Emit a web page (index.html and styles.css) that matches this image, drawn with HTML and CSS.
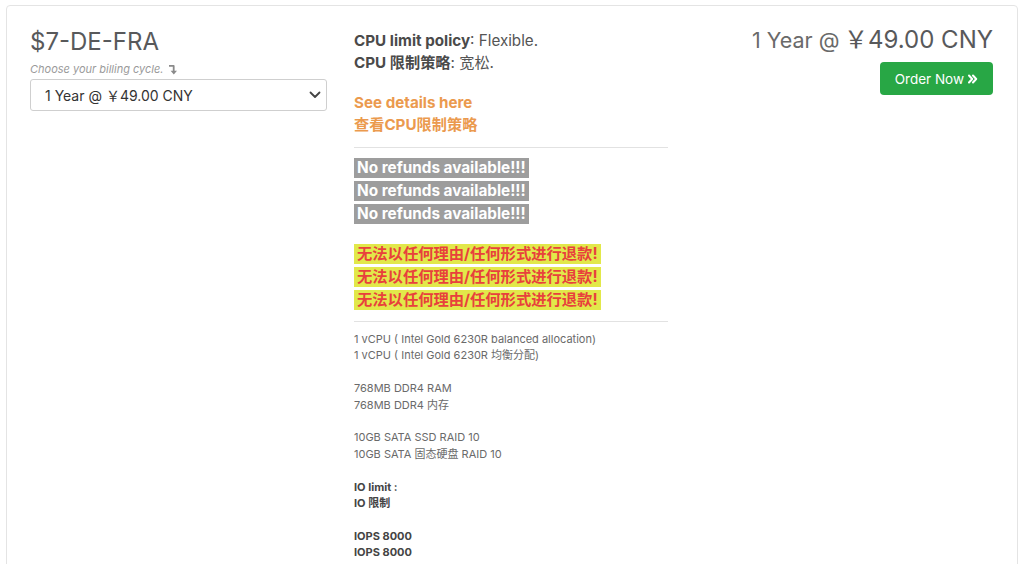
FILE: index.html
```html
<!DOCTYPE html>
<html lang="en">
<head>
<meta charset="utf-8">
<title>$7-DE-FRA</title>
<link rel="stylesheet" href="styles.css">
</head>
<body>
<div class="card">
  <div class="col-left">
    <h2 class="title">$7-DE-FRA</h2>
    <div class="cycle-hint">Choose your billing cycle.
      <svg class="hint-icon" width="9" height="11" viewBox="0 0 9 11"><path d="M0 1 H4.6 Q5.6 1 5.6 2 V6.8 H8 L4.8 10.6 L1.6 6.8 H3.8 V2.8 H0 Z" fill="#8a8a8a"/></svg>
    </div>
    <div class="select-wrap">
      <select class="cycle-select">
        <option>1 Year @ ￥49.00 CNY</option>
      </select>
      <svg class="chev" width="12" height="8" viewBox="0 0 12 8"><path d="M1.5 1.5 L6 6 L10.5 1.5" fill="none" stroke="#444" stroke-width="1.8" stroke-linecap="round" stroke-linejoin="round"/></svg>
    </div>
  </div>

  <div class="col-mid">
    <p class="policy"><b>CPU limit policy</b>: Flexible.<br><b>CPU 限制策略</b>: 宽松.</p>
    <p class="details"><a href="#">See details here</a><br><a href="#">查看CPU限制策略</a></p>
    <hr class="rule">
    <div class="refund-list">
      <span class="badge-grey">No refunds available!!!</span>
      <span class="badge-grey">No refunds available!!!</span>
      <span class="badge-grey">No refunds available!!!</span>
    </div>
    <div class="refund-list cn">
      <span class="badge-yellow">无法以任何理由/任何形式进行退款!</span>
      <span class="badge-yellow">无法以任何理由/任何形式进行退款!</span>
      <span class="badge-yellow">无法以任何理由/任何形式进行退款!</span>
    </div>
    <hr class="rule rule-tight">
    <div class="specs">
      <p>1 vCPU ( Intel Gold 6230R balanced allocation)<br>1 vCPU ( Intel Gold 6230R 均衡分配)</p>
      <p>768MB DDR4 RAM<br>768MB DDR4 内存</p>
      <p>10GB SATA SSD RAID 10<br>10GB SATA 固态硬盘 RAID 10</p>
      <p class="strong">IO limit :<br>IO 限制</p>
      <p class="strong">IOPS 8000<br>IOPS 8000</p>
    </div>
  </div>

  <div class="col-right">
    <div class="price"><span class="price-cycle">1 Year @</span> <span class="price-amount">￥49.00 CNY</span></div>
    <a class="btn-order" href="#">Order Now
      <svg width="10" height="10" viewBox="0 0 10 10"><path d="M1 1.5 L4.2 5 L1 8.5 M5 1.5 L8.2 5 L5 8.5" fill="none" stroke="#fff" stroke-width="2" stroke-linecap="round" stroke-linejoin="round"/></svg>
    </a>
  </div>
</div>
</body>
</html>
```

FILE: styles.css
```css
* { box-sizing: border-box; }
html, body { margin: 0; background: #fff; }
body {
  padding: 5px 6px 0 6px;
  font-family: Inter, "Noto Sans CJK SC", sans-serif;
  color: #58595b;
  height: 564px;
  overflow: hidden;
}
.card {
  border: 1px solid #e4e4e4;
  border-radius: 4px;
  padding: 22px 24px 40px 23px;
  display: grid;
  grid-template-columns: 297px 314px 1fr;
  column-gap: 27px;
  min-height: 600px;
}
.title {
  margin: -1px 0 0;
  font-size: 24px;
  font-weight: 400;
  line-height: 30px;
  color: #58595b;
}
.cycle-hint {
  margin-top: 5px;
  font-size: 11px;
  font-style: italic;
  color: #9a9a9a;
  line-height: 14px;
}
.hint-icon { vertical-align: -2px; margin-left: 2px; }
.select-wrap {
  position: relative;
  margin-top: 3px;
}
.cycle-select {
  appearance: none;
  -webkit-appearance: none;
  width: 297px;
  height: 32px;
  border: 1px solid #cfcfcf;
  border-radius: 3px;
  background: #fff;
  padding: 0 14px;
  font-family: Inter, "Noto Sans CJK SC", sans-serif;
  font-size: 14px;
  color: #333;
}
.chev { position: absolute; right: 6px; top: 12px; }

.col-mid { font-size: 15.2px; line-height: 22px; }
.policy { margin: 2px 0 0; color: #555; }
.policy b { color: #4a4a4a; }
.details { margin: 18px 0 0; font-weight: 700; }
.details a { color: #eb9a4e; text-decoration: none; }
.rule {
  border: 0;
  border-top: 1px solid #e2e2e2;
  margin: 11px 0 10px;
}
.rule-tight { margin: 10px 0 9px; }
.refund-list { display: flex; flex-direction: column; align-items: flex-start; gap: 3px; font-size: 15.3px; }
.refund-list.cn { margin-top: 20px; margin-bottom: 11px; }
.badge-grey {
  background: #9d9d9d;
  color: #fff;
  font-weight: 700;
  line-height: 20px;
  padding: 0 3px;
}
.badge-yellow {
  background: #e2e84a;
  color: #e8413c;
  font-weight: 700;
  line-height: 20px;
  padding: 0 3px;
}
.specs { font-size: 11px; line-height: 16.4px; color: #6a6a6a; padding-top: 0; }
.specs p { margin: 0 0 16.4px; }
.specs .strong { font-weight: 700; color: #444; }

.col-right { display: flex; flex-direction: column; align-items: flex-end; }
.price { margin-top: -3px; line-height: 30px; white-space: nowrap; }
.price-cycle { font-size: 21.5px; color: #6a6a6a; }
.price-amount { font-size: 24px; color: #58595b; }
.btn-order {
  margin-top: 5px;
  display: flex;
  align-items: center;
  gap: 4px;
  height: 33px;
  padding: 0 15px;
  background: #28a745;
  color: #fff;
  border-radius: 4px;
  font-size: 13.5px;
  text-decoration: none;
}
```
